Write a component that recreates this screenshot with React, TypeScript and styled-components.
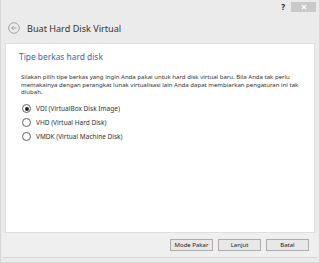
import React from 'react';
import styled, { createGlobalStyle } from 'styled-components';

const GlobalStyle = createGlobalStyle`
  html, body {
    margin: 0;
    padding: 0;
    background: #f3f3f3;
  }
  * {
    box-sizing: border-box;
  }
`;

const Window = styled.div`
  width: 320px;
  height: 263px;
  display: flex;
  flex-direction: column;
  background: #ebebeb;
  border: 1px solid #d8d8d8;
  border-top: none;
  font-family: 'Noto Sans', 'Open Sans', sans-serif;
  color: #333;
  overflow: hidden;
`;

const TitleBar = styled.div`
  height: 14px;
  display: flex;
  justify-content: flex-end;
  align-items: flex-start;
  padding-top: 2px;
  padding-right: 3px;
`;

const HelpMark = styled.span`
  font-size: 8px;
  font-weight: 700;
  line-height: 8px;
  color: #222;
  margin-right: 6px;
  margin-top: 1px;
`;

const CloseButton = styled.div`
  width: 25px;
  height: 10px;
  background: #c9c9c9;
  display: flex;
  align-items: center;
  justify-content: center;
`;

const Header = styled.div`
  height: 29px;
  display: flex;
  align-items: center;
  padding-left: 7px;
  padding-bottom: 1px;
  gap: 7px;
`;

const HeaderTitle = styled.span`
  font-size: 9.1px;
  color: #333;
`;

const Panel = styled.div`
  flex: 1;
  margin: 0 4px;
  background: #fff;
  border: 1px solid #dedede;
  padding: 7px 13px 0 13px;
`;

const Heading = styled.div`
  font-size: 8.4px;
  color: #4561ab;
  line-height: 11px;
  margin-bottom: 12px;
`;

const Paragraph = styled.div`
  font-size: 6.05px;
  line-height: 7.7px;
  color: #333;
  padding-left: 2px;
  margin-bottom: 7px;
`;

const Line = styled.div`
  white-space: nowrap;
`;

const RadioList = styled.div`
  display: flex;
  flex-direction: column;
  gap: 5px;
  padding-left: 3px;
`;

const RadioRow = styled.label`
  display: flex;
  align-items: center;
  gap: 5px;
  font-size: 6.5px;
  color: #333;
  height: 9px;
`;

const RadioCircle = styled.span<{ $checked?: boolean }>`
  width: 9px;
  height: 9px;
  border-radius: 50%;
  border: 1px solid #5f5f5f;
  background: #fff;
  display: flex;
  align-items: center;
  justify-content: center;

  &::after {
    content: '';
    width: 4px;
    height: 4px;
    border-radius: 50%;
    background: ${p => (p.$checked ? '#222' : 'transparent')};
  }
`;

const Footer = styled.div`
  height: 25px;
  display: flex;
  justify-content: flex-end;
  align-items: flex-start;
  padding: 6px 9px 0 0;
  gap: 5px;
  border-bottom: 1px solid #d6d6d6;
  margin: 0 1px;
  background: #efefef;
`;

const Button = styled.div`
  width: 43px;
  height: 12px;
  background: #e8e8e8;
  border: 1px solid #adadad;
  display: flex;
  align-items: center;
  justify-content: center;
  font-size: 6px;
  color: #222;
`;

const Bottom = styled.div`
  height: 4px;
`;

const BackIcon = () => (
  <svg width="12" height="12" viewBox="0 0 12 12">
    <circle cx="6" cy="6" r="5.3" fill="none" stroke="#9c9c9c" strokeWidth="0.9" />
    <path d="M8.6 6H3.6M5.6 4L3.6 6L5.6 8" fill="none" stroke="#9c9c9c" strokeWidth="0.9" />
  </svg>
);

const CloseIcon = () => (
  <svg width="6" height="6" viewBox="0 0 6 6">
    <path d="M1 1L5 5M5 1L1 5" stroke="#fff" strokeWidth="1.2" />
  </svg>
);

const options = [
  { label: 'VDI (VirtualBox Disk Image)', checked: true },
  { label: 'VHD (Virtual Hard Disk)', checked: false },
  { label: 'VMDK (Virtual Machine Disk)', checked: false },
];

export default function App() {
  return (
    <>
      <GlobalStyle />
      <Window>
        <TitleBar>
          <HelpMark>?</HelpMark>
          <CloseButton>
            <CloseIcon />
          </CloseButton>
        </TitleBar>
        <Header>
          <BackIcon />
          <HeaderTitle>Buat Hard Disk Virtual</HeaderTitle>
        </Header>
        <Panel>
          <Heading>Tipe berkas hard disk</Heading>
          <Paragraph>
            <Line>Silakan pilih tipe berkas yang ingin Anda pakai untuk hard disk virtual baru. Bila Anda tak perlu</Line>
            <Line>memakainya dengan perangkat lunak virtualisasi lain Anda dapat membiarkan pengaturan ini tak</Line>
            <Line>diubah.</Line>
          </Paragraph>
          <RadioList>
            {options.map(o => (
              <RadioRow key={o.label}>
                <RadioCircle $checked={o.checked} />
                {o.label}
              </RadioRow>
            ))}
          </RadioList>
        </Panel>
        <Footer>
          <Button>Mode Pakar</Button>
          <Button>Lanjut</Button>
          <Button>Batal</Button>
        </Footer>
        <Bottom />
      </Window>
    </>
  );
}
